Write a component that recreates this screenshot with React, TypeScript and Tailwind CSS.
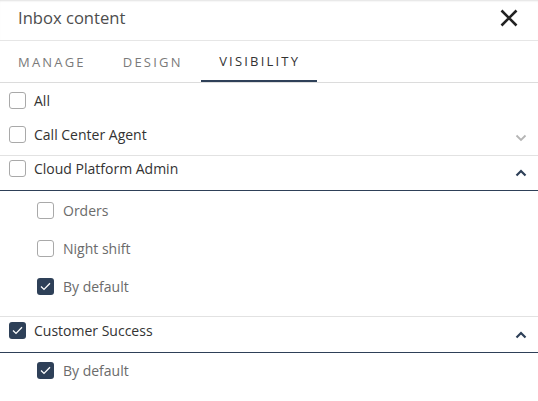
type Item = { name: string; checked: boolean };

type Group = {
  name: string;
  checked: boolean;
  open: boolean;
  children: Item[];
};

const groups: Group[] = [
  { name: "Call Center Agent", checked: false, open: false, children: [] },
  {
    name: "Cloud Platform Admin",
    checked: false,
    open: true,
    children: [
      { name: "Orders", checked: false },
      { name: "Night shift", checked: false },
      { name: "By default", checked: true },
    ],
  },
  {
    name: "Customer Success",
    checked: true,
    open: true,
    children: [{ name: "By default", checked: true }],
  },
];

function Box({ checked }: { checked: boolean }) {
  return checked ? (
    <span className="flex h-[17px] w-[17px] shrink-0 items-center justify-center rounded-[3px] bg-[#2e4058]">
      <svg width="11" height="9" viewBox="0 0 11 9" fill="none">
        <path d="M1 4.6L4 7.4L10 1.2" stroke="#fff" strokeWidth="1.3" />
      </svg>
    </span>
  ) : (
    <span className="h-[17px] w-[17px] shrink-0 rounded-[3px] border border-[#a9a9a9] bg-white" />
  );
}

function Chevron({ up }: { up: boolean }) {
  return up ? (
    <svg width="12" height="8" viewBox="0 0 12 8" fill="none">
      <path d="M1.5 6.5L6 2L10.5 6.5" stroke="#2e4058" strokeWidth="2.2" />
    </svg>
  ) : (
    <svg width="12" height="8" viewBox="0 0 12 8" fill="none">
      <path d="M1.5 1.5L6 6L10.5 1.5" stroke="#b5b5b5" strokeWidth="1.8" />
    </svg>
  );
}

export default function App() {
  return (
    <div className="h-[401px] w-[538px] overflow-hidden bg-white font-['Open_Sans',sans-serif]">
      {/* header */}
      <div className="flex h-[41px] items-center justify-between border-b border-[#e6e6e6] pl-[18px] pr-[20px] shadow-[inset_0_2px_2px_-1px_rgba(0,0,0,0.12)]">
        <span className="pb-[4px] text-[16.6px] text-[#4d4d4d]">Inbox content</span>
        <svg width="18" height="18" viewBox="0 0 18 18" className="mb-[5px]">
          <path d="M1.5 1.5L16.5 16.5M16.5 1.5L1.5 16.5" stroke="#222" strokeWidth="2.6" />
        </svg>
      </div>

      {/* tabs */}
      <div className="flex h-[42px] border-b border-[#dcdcdc] text-[13px] tracking-[2.2px]">
        <div className="flex items-center pl-[18px] pr-[19px] pt-[3px] text-[#7a7a7a]">MANAGE</div>
        <div className="flex items-center px-[18px] pt-[3px] text-[#7a7a7a]">DESIGN</div>
        <div className="flex w-[116px] items-center justify-center border-b-2 border-[#2e4058] pl-[2px] pt-[3px] text-[#333]">
          VISIBILITY
        </div>
      </div>

      {/* all */}
      <div className="flex h-[35px] items-start gap-[8px] pl-[9px] pt-[9px] text-[14px] leading-[17px] text-[#333]">
        <Box checked={false} />
        <span>All</span>
      </div>

      {groups.map((g, gi) => (
        <div key={g.name} className={gi === 2 ? "border-t border-[#e2e2e2]" : ""}>
          <div
            className={
              "flex items-start justify-between pl-[9px] pr-[11px] text-[14px] leading-[17px] text-[#333] " +
              (g.open
                ? "border-b border-[#2e4058] " + (gi === 2 ? "h-[36px] pt-[5px]" : "h-[35px] pt-[4px]")
                : "h-[38px] border-b border-[#e2e2e2] pt-[8px]")
            }
          >
            <div className="flex items-center gap-[8px]">
              <Box checked={g.checked} />
              <span>{g.name}</span>
            </div>
            <span className={g.open ? "pt-[9px]" : "pt-[8px]"}>
              <Chevron up={g.open} />
            </span>
          </div>
          {g.open && (
            <div className={gi === 1 ? "flex flex-col gap-[21px] pb-[21px] pt-[11px]" : "flex flex-col pt-[9px]"}>
              {g.children.map((c) => (
                <div key={c.name} className="flex h-[17px] items-center gap-[9px] pl-[37px] text-[14px] text-[#6b6b6b]">
                  <Box checked={c.checked} />
                  <span>{c.name}</span>
                </div>
              ))}
            </div>
          )}
        </div>
      ))}
    </div>
  );
}
